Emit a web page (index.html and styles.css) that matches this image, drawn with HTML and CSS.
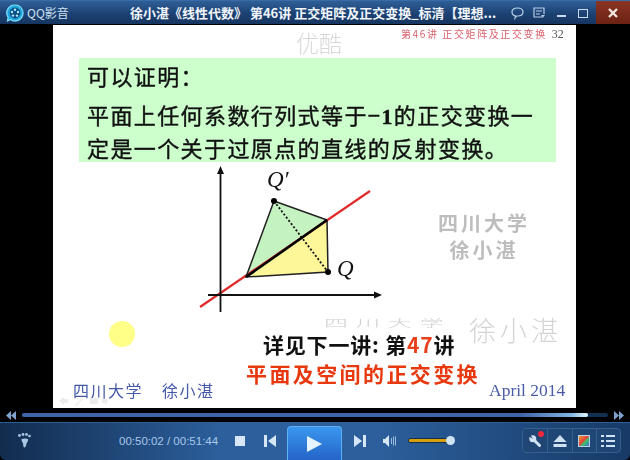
FILE: index.html
```html
<!DOCTYPE html>
<html lang="zh">
<head>
  <meta charset="UTF-8">
  <title>QQ影音</title>
  <link rel="stylesheet" href="styles.css">
</head>
<body>
  <div class="player">
    <div class="titlebar">
      <div class="brand">
        <svg class="logo" width="18" height="18" viewBox="0 0 18 18">
          <path d="M9 1a8 8 0 1 1-4.6 14.5L1.5 17l.6-3.6A8 8 0 0 1 9 1z" fill="#1fa6dc" stroke="#7fe0fa" stroke-width="1.2"/>
          <circle cx="9" cy="9" r="5.4" fill="#0b4f86"/>
          <circle cx="9" cy="5.8" r="1.2" fill="#a8ecff"/>
          <circle cx="12" cy="8" r="1.2" fill="#a8ecff"/>
          <circle cx="11" cy="11.6" r="1.2" fill="#a8ecff"/>
          <circle cx="7" cy="11.6" r="1.2" fill="#a8ecff"/>
          <circle cx="6" cy="8" r="1.2" fill="#a8ecff"/>
        </svg>
        <span class="app-name">QQ影音</span>
      </div>
      <div class="video-name">徐小湛《线性代数》 第46讲 正交矩阵及正交变换_标清【理想...</div>
      <div class="win-btns">
        <svg class="win-btn" width="21" height="24" viewBox="0 0 21 24"><path d="M5 11c0-3 2.500-4 5.500-4s5.500 1 5.500 4-2.500 4-5.500 4l-1 .2-1.500 2 .3-2.400C6.300 14.400 5 13 5 11z" fill="none" stroke="#b9cfe8" stroke-width="1.200"/></svg>
        <svg class="win-btn" width="22" height="24" viewBox="0 0 22 24"><path d="M15 16H6V7h10v6M8 10h6M8 13h4" fill="none" stroke="#b9cfe8" stroke-width="1.200"/><path d="M13 14h4l-2 2.500z" fill="#b9cfe8"/></svg>
        <svg class="win-btn" width="22" height="24" viewBox="0 0 22 24"><rect x="7" y="14" width="9" height="2" fill="#c9dcf0"/></svg>
        <svg class="win-btn" width="22" height="24" viewBox="0 0 22 24"><rect x="6.500" y="8.500" width="9" height="8" fill="none" stroke="#c9dcf0"/></svg>
        <div class="close-btn">
          <svg width="12" height="12" viewBox="0 0 12 12"><path d="M2 2l8 8M10 2l-8 8" stroke="#f4e6e0" stroke-width="2.400"/></svg>
        </div>
      </div>
    </div>

    <div class="video">
      <div class="slide">
        <div class="logo-mark">优酷</div>
        <div class="slide-head">第46讲 正交矩阵及正交变换<span class="page-no">32</span></div>
        <div class="theorem">
          <p>可以证明：</p>
          <p class="theorem-body">平面上任何系数行列式等于−<b>1</b>的正交变换一<br>定是一个关于过原点的直线的反射变换。</p>
        </div>

        <svg class="diagram" width="210" height="160" viewBox="0 0 210 160">
          <path d="M84 41L137 60L56 117z" fill="#c4f2c0"/>
          <path d="M137 60L138 112L56 117z" fill="#fdf79a"/>
          <path d="M10 147L180 31" stroke="#e02a2a" stroke-width="2.200"/>
          <path d="M84 41L137 60M84 41L56 117L138 112L137 60" fill="none" stroke="#222" stroke-width="1.500"/>
          <path d="M56 117L137 60" stroke="#000" stroke-width="2.600"/>
          <path d="M84 41L138 112" stroke="#111" stroke-width="1.800" stroke-dasharray="2 2"/>
          <path d="M30.500 152V12M18 135H186" stroke="#111" stroke-width="1.800"/>
          <path d="M30.500 6l-3.500 8h7zM192 135l-8-3.500v7z" fill="#111"/>
          <circle cx="84" cy="41" r="3" fill="#000"/>
          <circle cx="138" cy="112" r="3" fill="#000"/>
          <text class="point" x="77" y="27">Q′</text>
          <text class="point" x="147" y="116">Q</text>
        </svg>

        <div class="stamp">四川大学<br>徐小湛</div>
        <div class="ghost-school">四川大学</div>
        <div class="ghost-name">徐小湛</div>
        <div class="sun"></div>
        <div class="next-note">详见下一讲: 第<span class="hot">47</span>讲</div>
        <div class="next-title">平面及空间的正交变换</div>
        <div class="signature"><span>四川大学</span><span>徐小湛</span></div>
        <div class="date">April 2014</div>
        <svg class="slide-nav" width="50" height="12" viewBox="0 0 50 12">
          <path d="M1 6l5-4v2h4v4H6v2zM17 10l8-8 1 1-8 8zM32 3h8v6h-8zM44 4h3V2l3 4-3 4V8h-3z" fill="#ececec"/>
        </svg>
      </div>
    </div>

    <div class="seekbar">
      <svg width="10" height="9" viewBox="0 0 10 9"><path d="M5 0v9L0 4.500zM10 0v9L5 4.500z" fill="#7fa3cf"/></svg>
      <div class="track"><div class="played" style="width:96.600%"></div></div>
      <svg width="10" height="9" viewBox="0 0 10 9"><path d="M0 0v9l5-4.500zM5 0v9l5-4.500z" fill="#7fa3cf"/></svg>
    </div>

    <div class="controls">
      <svg class="foot" width="13" height="15" viewBox="0 0 13 15">
        <path d="M3.500 6c2-.8 5-.8 6.500 0 .3 2-.8 3.300-1.500 4.500-.4 1.500-.6 4-2 4-1.600 0-1-3-1.500-4C4.500 9.300 3.400 8 3.500 6z" fill="#a9c6e2"/>
        <circle cx="1.500" cy="2.500" r="1.400" fill="#a9c6e2"/>
        <circle cx="5" cy="1.500" r="1.400" fill="#a9c6e2"/>
        <circle cx="8.500" cy="1.500" r="1.400" fill="#a9c6e2"/>
        <circle cx="11.500" cy="3" r="1.300" fill="#a9c6e2"/>
      </svg>
      <div class="time">00:50:02 / 00:51:44</div>
      <div class="stop"></div>
      <svg class="prev" width="12" height="12" viewBox="0 0 12 12"><path d="M0 0h3v12H0zM12 0v12L4 6z" fill="#d6e8f8"/></svg>
      <button class="play"><svg width="15" height="16" viewBox="0 0 15 16"><path d="M0 0l15 8L0 16z" fill="#e6f4ff"/></svg></button>
      <svg class="next" width="12" height="12" viewBox="0 0 12 12"><path d="M12 0H9v12h3zM0 0v12l8-6z" fill="#d6e8f8"/></svg>
      <svg class="speaker" width="14" height="12" viewBox="0 0 14 12"><path d="M0 4h2l4-4v12L2 8H0z" fill="#d6e8f8"/><path d="M8.500 3v6M10.500 1.500v9M12.500 1.500v9" stroke="#9dbcdc"/></svg>
      <div class="volume"><div class="volume-knob"></div></div>
      <div class="toolbox">
        <div class="tool">
          <svg class="wrench" width="12" height="12" viewBox="0 0 12 12">
            <path d="M4.500 4.500L10.500 10.500" stroke="#cfe2f5" stroke-width="3" stroke-linecap="round"/>
            <circle cx="3.800" cy="3.800" r="3.500" fill="#cfe2f5"/>
            <path d="M3.800 3.800L1.500 0H0v1.500z" fill="#1f4674"/>
          </svg>
          <span class="dot"></span>
        </div>
        <div class="tool">
          <svg width="14" height="12" viewBox="0 0 14 12"><path d="M7 0l6.500 7H.5zM.5 9h13v3H.5z" fill="#cfe2f5"/></svg>
        </div>
        <div class="tool">
          <div class="swatch"></div>
        </div>
        <div class="tool">
          <svg width="14" height="12" viewBox="0 0 14 12"><path d="M0 0h3v2H0zM5 0h9v2H5zM0 5h3v2H0zM5 5h9v2H5zM0 10h3v2H0zM5 10h9v2H5z" fill="#cfe2f5"/></svg>
        </div>
      </div>
    </div>
  </div>
</body>
</html>
```
FILE: styles.css
```css
html, body {
  margin: 0;
  padding: 0;
  background: #000;
}

.player {
  width: 630px;
  height: 460px;
  display: flex;
  flex-direction: column;
  overflow: hidden;
  font-family: "Noto Sans CJK SC", "Liberation Sans", sans-serif;
}

/* title bar */
.titlebar {
  height: 24px;
  flex: none;
  display: flex;
  align-items: center;
  border-top: 1px solid #3a6ba6;
  box-sizing: border-box;
  background: linear-gradient(to bottom, #2f5f97, #1c4273 55%, #163560);
}

.brand {
  width: 130px;
  flex: none;
  display: flex;
  align-items: center;
  gap: 3px;
  padding-left: 6px;
  box-sizing: border-box;
}

.app-name {
  color: #cfe0f2;
  font-size: 12px;
}

.video-name {
  flex: 1;
  color: #f2f6fb;
  font-size: 13px;
  font-weight: 700;
  white-space: nowrap;
}

.win-btns {
  display: flex;
  align-items: center;
  height: 100%;
}

.win-btn {
  display: block;
}

.close-btn {
  width: 34px;
  height: 23px;
  margin-left: 2px;
  display: flex;
  align-items: center;
  justify-content: center;
  background: linear-gradient(to bottom, #8a3423, #6c2213);
}

/* video */
.video {
  height: 384px;
  flex: none;
  padding-left: 53px;
  background: #000;
}

.slide {
  position: relative;
  width: 523px;
  height: 383px;
  margin-top: 1px;
  background: #fff;
  overflow: hidden;
  filter: blur(0.4px);
}

.logo-mark {
  position: absolute;
  left: 243px;
  top: 1px;
  color: #d8d8d8;
  font-size: 23px;
  font-weight: 300;
  line-height: 32px;
}

.slide-head {
  position: absolute;
  left: 348px;
  top: 2px;
  color: #d9606c;
  font-size: 10px;
  line-height: 14px;
  letter-spacing: 1.600px;
  white-space: nowrap;
}

.page-no {
  margin-left: 5px;
  color: #555;
  font-family: "Liberation Serif", serif;
  font-size: 12px;
  letter-spacing: 0;
}

.theorem {
  position: absolute;
  left: 26px;
  top: 33px;
  width: 477px;
  height: 104px;
  padding: 2px 8px;
  box-sizing: border-box;
  background: #ccffcc;
  color: #111;
  font-size: 22px;
  letter-spacing: 1.400px;
  white-space: nowrap;
  -webkit-text-stroke: .4px #111;
}

.theorem p {
  margin: 0;
  line-height: 30px;
}

.theorem .theorem-body {
  margin-top: 9px;
}

.theorem-body b {
  font-family: "Liberation Serif", serif;
}

.diagram {
  position: absolute;
  left: 137px;
  top: 135px;
}

.point {
  font-family: "Liberation Serif", serif;
  font-size: 23px;
  font-style: italic;
  fill: #111;
}

.stamp {
  position: absolute;
  left: 385px;
  top: 184px;
  color: #bdbdbd;
  font-size: 20px;
  font-weight: 700;
  line-height: 27px;
  letter-spacing: 3px;
  text-align: center;
  white-space: nowrap;
}

.ghost-school {
  position: absolute;
  left: 271px;
  top: 292px;
  color: #d0d0d0;
  font-size: 10px;
  font-weight: 300;
  line-height: 12px;
  letter-spacing: 3.300px;
  white-space: nowrap;
  transform: scaleX(2.4);
  transform-origin: left center;
}

.ghost-name {
  position: absolute;
  left: 416px;
  top: 291px;
  color: #d4d4d4;
  font-size: 27px;
  font-weight: 300;
  line-height: 28px;
  letter-spacing: 4px;
  white-space: nowrap;
}

.sun {
  position: absolute;
  left: 56px;
  top: 296px;
  width: 26px;
  height: 26px;
  border-radius: 50%;
  background: #ffff88;
}

.next-note {
  position: absolute;
  left: 210px;
  top: 304px;
  color: #111;
  font-size: 21px;
  font-weight: 700;
  line-height: 30px;
  letter-spacing: .8px;
  white-space: nowrap;
}

.hot {
  color: #e8401a;
}

.next-title {
  position: absolute;
  left: 193px;
  top: 333px;
  color: #e8380d;
  font-size: 21px;
  font-weight: 700;
  line-height: 30px;
  letter-spacing: 2.400px;
  white-space: nowrap;
}

.signature {
  position: absolute;
  left: 20px;
  top: 353px;
  display: flex;
  gap: 19px;
  color: #4458a8;
  font-size: 16px;
  line-height: 24px;
  letter-spacing: 1.500px;
  white-space: nowrap;
}

.date {
  position: absolute;
  left: 436px;
  top: 354px;
  color: #4a5ca8;
  font-family: "Liberation Serif", serif;
  font-size: 17.500px;
  line-height: 22px;
  white-space: nowrap;
}

.slide-nav {
  position: absolute;
  left: 5px;
  top: 370px;
}

/* seek bar */
.seekbar {
  height: 14px;
  flex: none;
  display: flex;
  align-items: center;
  gap: 6px;
  padding: 0 6px;
  background: #000;
}

.track {
  flex: 1;
  height: 4px;
  background: #12304f;
  border-radius: 2px;
}

.played {
  height: 100%;
  border-radius: 2px;
  background: linear-gradient(to right, #3f63a8 88%, #7fb4e0 97%, #e6fbff);
}

/* bottom controls */
.controls {
  height: 38px;
  flex: none;
  display: flex;
  align-items: center;
  padding-bottom: 2px;
  box-sizing: border-box;
  border-top: 1px solid #2f5f97;
  border-radius: 0 0 6px 6px;
  background: linear-gradient(to right, #122c4e, #2c5f9c 35%, #2c5f9c 60%, #173a66);
}

.foot {
  margin-left: 18px;
  flex: none;
}

.time {
  width: 116px;
  margin-left: 88px;
  flex: none;
  color: #a9c9ec;
  font-family: "Liberation Sans", sans-serif;
  font-size: 11.500px;
  white-space: nowrap;
}

.stop {
  width: 10px;
  height: 10px;
  flex: none;
  background: #d6e8f8;
}

.prev {
  margin-left: 19px;
  flex: none;
}

.play {
  width: 55px;
  height: 34px;
  margin: 0 0 -2px 11px;
  flex: none;
  align-self: flex-end;
  padding: 0;
  display: flex;
  align-items: center;
  justify-content: center;
  border: 1px solid #5db0f2;
  border-bottom: 0;
  border-radius: 4px 4px 0 0;
  background: linear-gradient(to bottom, #3a97ee, #2464c8);
}

.next {
  margin-left: 12px;
  flex: none;
}

.speaker {
  margin-left: 17px;
  flex: none;
}

.volume {
  position: relative;
  width: 39px;
  height: 3px;
  margin-left: 11px;
  flex: none;
  background: #d99f0a;
  border: 1px solid #13304f;
  border-radius: 2px;
}

.volume-knob {
  position: absolute;
  right: -7px;
  top: -3px;
  width: 9px;
  height: 9px;
  border-radius: 50%;
  background: #cfe3f5;
}

.toolbox {
  margin-left: 73px;
  flex: none;
  display: flex;
  height: 23px;
  border: 1px solid #355f90;
  border-radius: 4px;
  background: #1f4674;
}

.tool {
  position: relative;
  width: 24.250px;
  display: flex;
  align-items: center;
  justify-content: center;
  border-left: 1px solid #355f90;
  box-sizing: border-box;
}

.tool:first-child {
  border-left: 0;
}

.dot {
  position: absolute;
  right: 3px;
  top: 2px;
  width: 6px;
  height: 6px;
  border-radius: 50%;
  background: #f0283c;
}

.swatch {
  width: 10px;
  height: 10px;
  border: 1px solid #bcd2e8;
  background: linear-gradient(135deg, #e8a020, #e84040 45%, #40c060 60%, #4070e0);
}
```
